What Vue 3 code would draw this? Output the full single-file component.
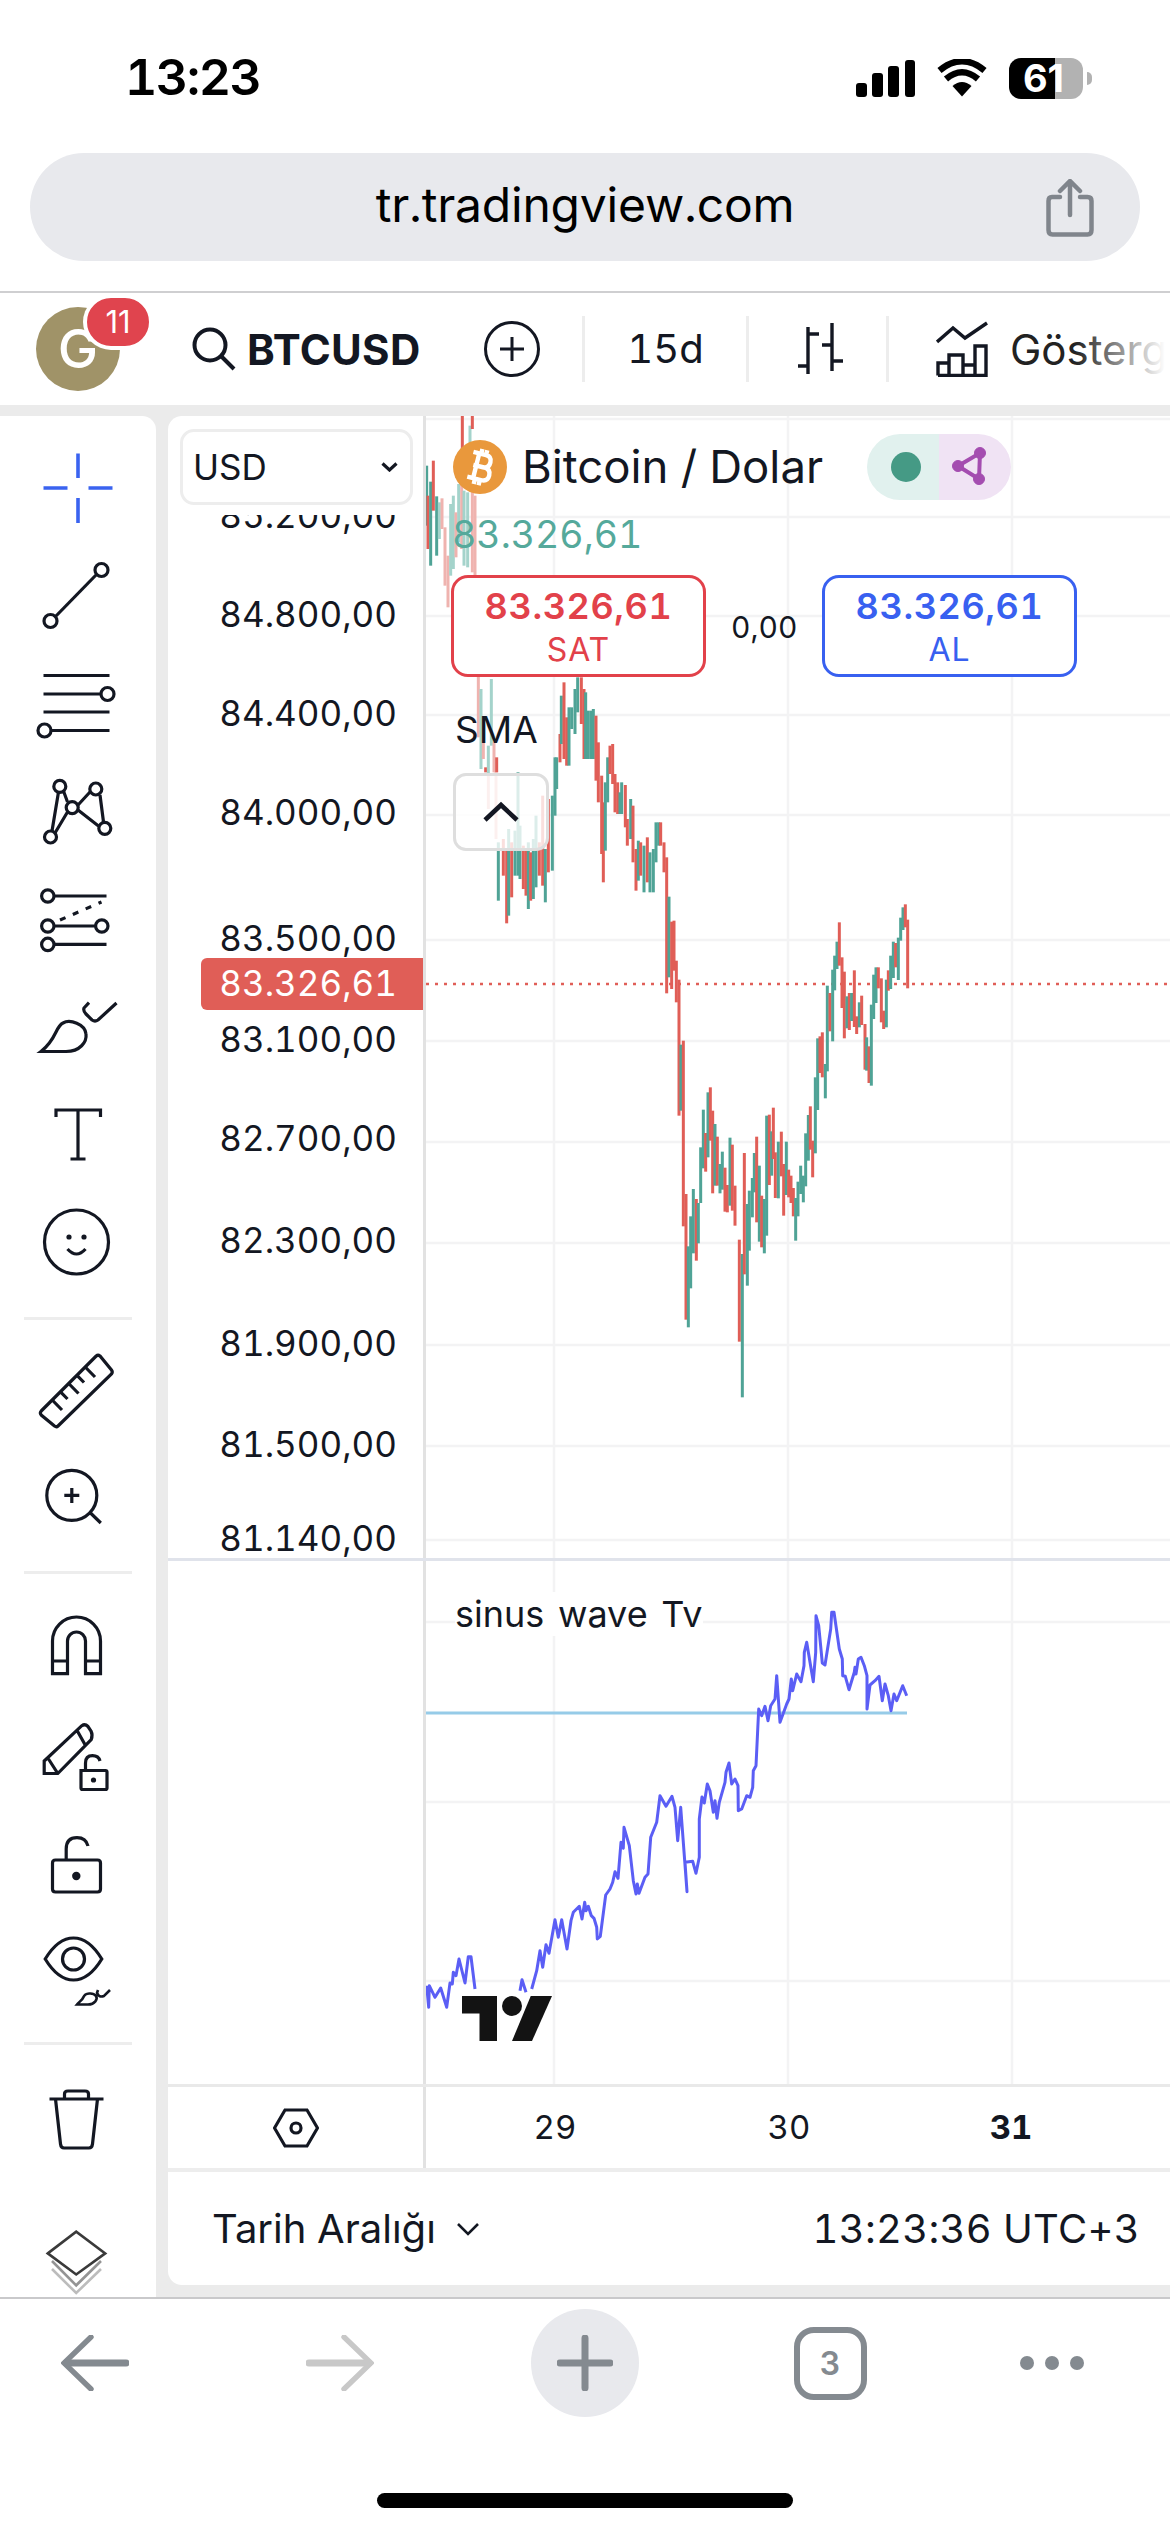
<script setup>
const R = '#e05e57', T = '#4fa396', P = '#efb3af', Q = '#a4d3cb'

// readings of the reference chart: [colour, x, top, bottom] in 3x crop units
const upper = [
  [T,20,170,350],[R,24,260,420],[T,32,218,470],[R,40,155,305],[T,50,262,440],[Q,58,280,390],[P,66,268,360],[P,75,355,530],[P,84,440,595],[Q,92,285,500],[Q,100,260,480],[P,108,310,445],[Q,116,225,400],[R,127,20,130],[P,125,130,420],[Q,132,245,470],[Q,143,250,475],[Q,150,50,230],[R,157,20,60],[P,157,230,490],[P,165,260,500],
  [P,175,800,985],[Q,183,840,1080],[P,190,985,1050],[R,197,1075,1090],[Q,214,810,1010],[Q,205,1010,1095],[P,222,1000,1090],[R,230,1045,1090],
  [P,205,1100,1200],[T,235,1300,1475],[P,228,1090,1290],[R,250,1290,1400],[R,260,1320,1543],[T,266,1260,1520],[R,275,1300,1465],[T,285,1265,1400],[T,294,1090,1400],[T,300,1250,1410],[R,310,1310,1440],[R,318,1320,1460],[T,325,1300,1500],[R,332,1330,1475],[T,340,1290,1470],[T,348,1220,1435],[R,358,1300,1400],[R,368,1160,1430],[T,376,1320,1480],[R,385,1170,1390],[T,397,1160,1385],[T,405,1045,1220],[T,410,1045,1140],[R,420,975,1060],[T,424,860,1005],[R,432,820,1050],[R,440,925,1070],[T,447,895,1070],[T,455,895,960],[T,465,840,975],[T,473,805,910],[R,484,805,945],[R,492,840,1050],[T,497,850,1050],[T,505,905,1050],[T,514,905,1050],[T,520,900,1050],[R,528,920,1115],[R,535,1000,1180],[R,545,1100,1335],[R,550,1180,1420],[T,556,1120,1325],[T,563,1045,1180],[R,570,1010,1095],[R,578,1005,1125],[R,585,1095,1210],[R,593,1120,1215],[T,600,1150,1215],[T,605,1120,1215],[R,616,1128,1255],[R,622,1230,1310],[T,632,1170,1290],[R,639,1190,1360],[R,648,1320,1445],[T,655,1295,1415],[R,662,1300,1400],[T,672,1310,1450],[R,682,1285,1420],[T,690,1330,1450],[T,700,1320,1450],[T,708,1240,1360],[T,716,1240,1310],[R,722,1240,1310],[R,732,1300,1390],[R,740,1345,1753],[T,747,1463,1705],[R,755,1538,1740],[R,762,1535,1685],
].map(([color, x, a, b]) => ({ color, x: 420 + x / 3, y: 410 + a / 3, h: (b - a) / 3 }))

const lower = [
  [R,769,185,310],[R,777,242,650],[T,783,437,635],[R,790,425,982],[R,798,885,1262],[T,805,1042,1285],[T,812,952,1168],[T,820,870,1063],[R,829,900,1085],[T,835,912,1033],[T,842,745,912],[T,850,632,808],[R,857,702,818],[T,864,580,775],[R,871,565,725],[R,878,635,883],[T,885,675,860],[R,892,713,860],[T,900,795,883],[T,907,758,872],[R,915,806,938],[R,922,858,940],[T,930,716,920],[R,937,737,935],[R,945,860,980],[R,958,1022,1328],[T,967,1065,1495],[R,973,762,1126],[T,982,915,1160],[T,988,875,1055],[T,997,837,955],[T,1003,762,880],[R,1010,713,970],[T,1018,800,1028],[R,1025,890,1045],[T,1033,900,1063],[T,1040,650,1010],[R,1048,647,858],[T,1055,697,830],[R,1060,626,780],[R,1066,760,897],[T,1075,728,898],[R,1084,698,832],[R,1091,795,950],[T,1099,728,888],[R,1106,812,895],[R,1113,830,912],[R,1120,867,952],[T,1127,897,1025],[T,1134,848,952],[T,1142,800,885],[T,1150,830,910],[T,1157,703,862],[T,1165,648,785],[R,1171,622,752],[R,1178,725,835],[T,1186,535,763],[T,1193,418,633],[R,1200,412,522],[R,1207,400,535],[T,1216,495,598],[T,1222,260,517],[R,1230,282,397],[T,1238,212,427],[T,1244,170,274],[T,1251,128,210],[R,1258,70,200],[R,1266,175,327],[R,1273,218,418],[T,1281,292,388],[R,1288,282,393],[T,1295,282,366],[R,1303,214,384],[R,1310,352,405],[T,1318,310,385],[R,1325,290,378],[R,1335,375,512],[T,1340,415,515],[R,1347,442,552],[T,1354,317,560],[T,1361,227,360],[T,1368,205,312],[R,1375,205,268],[R,1384,238,370],[R,1391,335,390],[T,1399,242,385],[R,1405,214,275],[T,1412,170,270],[T,1420,128,237],[R,1427,132,205],[T,1435,116,243],[T,1442,56,125],[T,1449,25,93],[R,1456,16,85],[R,1463,62,268],
].map(([color, x, a, b]) => ({ color, x: 420 + x / 3, y: 900 + a / 3, h: (b - a) / 3 }))

const candles = [...upper, ...lower]

const toPoints = (str) => str.trim().split(/\s+/).map((p) => {
  const [x, y] = p.split(',').map(Number)
  return `${(420 + x / 3).toFixed(1)},${(1560 + y / 3).toFixed(1)}`
}).join(' ')

const waveParts = [
  '20,1280 26,1345 28,1280 45,1315 62,1287 80,1345 90,1272 97,1275 100,1240 108,1250 117,1200 135,1272 145,1193 153,1193 165,1290',
  '300,1295 306,1262 318,1300',
  '335,1290 350,1235 360,1175 368,1225 378,1157 387,1183 405,1082 415,1135 425,1082 441,1170 453,1085 460,1060 478,1042 486,1080 494,1030 498,1055 505,1042 514,1070 522,1078 530,1105 532,1140 541,1132 557,1008 570,990 578,970 585,938 594,958 603,850 610,868 612,805 628,860 640,965 648,1005 652,975 657,1003 675,955 684,945 692,835 710,790 720,710 738,742 756,712 765,745 773,845 782,745 801,998 795,910 818,907 828,943 838,895 838,780 846,714 853,732 862,675 870,695 880,760 885,725 891,778 898,730 915,670 918,640 927,612 935,675 945,660 954,680 955,755 965,750 980,710 990,715 998,685 1000,635 1008,620 1016,450 1025,470 1035,442 1044,485 1052,440 1065,420 1070,350 1080,490 1100,435 1107,420 1114,360 1118,395 1130,345 1143,368 1152,320 1153,280 1160,250 1170,310 1180,368 1187,280 1188,170 1196,200 1207,312 1215,318 1232,210 1235,160 1242,160 1258,270 1267,300 1268,350 1276,352 1287,392 1303,340 1305,325 1308,345 1315,300 1323,295 1333,320 1341,350 1341,450 1350,378 1365,365 1377,352 1387,425 1395,375 1405,410 1413,455 1422,405 1430,425 1448,380 1460,410',
].map(toPoints)

const vGrid = [554, 788, 1012]
const hGridMain = [420, 518, 617, 716, 816, 941, 1042, 1143, 1244, 1346, 1447, 1541]
const hGridSub = [1623, 1803, 1982]

const prices = [
  ['85.200,00', 515], ['84.800,00', 614], ['84.400,00', 713], ['84.000,00', 812], ['83.500,00', 938],
  ['83.100,00', 1039], ['82.700,00', 1138], ['82.300,00', 1240], ['81.900,00', 1343], ['81.500,00', 1444], ['81.140,00', 1538],
].map(([label, y]) => ({ label, top: y - 417 - 21 }))

const days = [
  { label: '29', x: 129 }, { label: '30', x: 363 }, { label: '31', x: 585, bold: true },
]
</script>

<template>
  <div class="page">
    <header class="status">
      <span class="time">13:23</span>
      <div class="status-icons">
        <div class="signal"><i class="b1"></i><i class="b2"></i><i class="b3"></i><i class="b4"></i></div>
        <svg class="wifi" width="50" height="38" viewBox="0 0 50 38">
          <path d="M25 37.5 L15.5 27 Q25 19 34.5 27 Z" fill="#000" />
          <path d="M9 20 Q25 6.5 41 20" fill="none" stroke="#000" stroke-width="6.5" />
          <path d="M2.5 11.5 Q25 -7 47.5 11.5" fill="none" stroke="#000" stroke-width="6.5" />
        </svg>
        <div class="battery"><span class="batt-txt">61</span></div>
        <i class="nub"></i>
      </div>
    </header>

    <div class="url-wrap">
      <div class="url">
        <span class="url-text">tr.tradingview.com</span>
        <svg class="share" width="48" height="58" viewBox="0 0 48 58" fill="none" stroke="#80858c" stroke-width="4.5" stroke-linecap="round">
          <path d="M14 18 H6 Q2.5 18 2.5 22 V51 Q2.5 55.5 6.5 55.5 H41.5 Q45.5 55.5 45.5 51 V22 Q45.5 18 41.5 18 H34" />
          <path d="M24 36 V3 M14 12 L24 2 L34 12" />
        </svg>
      </div>
    </div>

    <div class="tv-head">
      <div class="cell-avatar">
        <div class="avatar">G<span class="badge">11</span></div>
      </div>
      <div class="cell-symbol">
        <svg width="44" height="44" viewBox="0 0 44 44" fill="none" stroke="#131722" stroke-width="4">
          <circle cx="18" cy="18" r="15.5" />
          <path d="M29 29 L42 42" />
        </svg>
        <span class="symbol">BTCUSD</span>
      </div>
      <div class="cell-plus">
        <svg width="56" height="56" viewBox="0 0 56 56" fill="none" stroke="#131722" stroke-width="3">
          <circle cx="28" cy="28" r="26.5" /><path d="M28 16 V40 M16 28 H40" />
        </svg>
      </div>
      <div class="cell-interval">15d</div>
      <div class="cell-bars">
        <svg width="46" height="52" viewBox="0 0 46 52" fill="none" stroke="#131722" stroke-width="3.4">
          <path d="M10 4 V51 M10 11 H21 M10 43 H0 M34 0 V48 M34 22 H24 M34 38 H45" />
        </svg>
      </div>
      <div class="cell-ind">
        <svg width="52" height="56" viewBox="0 0 52 56" fill="none" stroke="#131722" stroke-width="3.4">
          <path d="M1 21 L17 7 L29 17 L51 2" />
          <path d="M2 54.5 V42 H13 V54.5 M13 54.5 V34 H27 V54.5 M27 54.5 V44 H39 V54.5 M39 54.5 V25 H50 V54.5 H2 Z" />
        </svg>
        <span class="ind-text">Göstergeler</span>
        <i class="ind-fade"></i>
      </div>
    </div>

    <div class="body">
      <aside class="tools">
        <div class="tool-group g1">
          <div class="tool"><svg width="80" height="80" viewBox="0 0 80 80" fill="none" stroke="#3a63f0" stroke-width="3.6"><path d="M5.5 40 H29.5 M50.5 40 H74.5 M40 5.5 V30 M40 50 V75" /></svg></div>
          <div class="tool"><svg class="ico" width="80" height="80" viewBox="0 0 80 80"><path d="M18 61 L58 20" /><circle cx="12.5" cy="66" r="6.5" /><circle cx="63.5" cy="15" r="6.5" /></svg></div>
          <div class="tool"><svg class="ico" width="80" height="80" viewBox="0 0 80 80"><path d="M5.5 12.5 H71.5 M5.5 31 H63 M5.5 49 H71.5 M13 67.5 H71.5" /><circle cx="69.5" cy="31" r="6.5" /><circle cx="6.5" cy="67.5" r="6.5" /></svg></div>
          <div class="tool"><svg class="ico" width="80" height="80" viewBox="0 0 80 80"><path d="M14 60 L20.5 21 M25.5 20 L29.5 31 M17 62 L29.5 41 M40 34 L52 21 M62 24 L65.5 51 M60.5 55 L40 39" /><circle cx="12.5" cy="66" r="6" /><circle cx="21.8" cy="15.4" r="6" /><circle cx="34.2" cy="36.6" r="6" /><circle cx="57.8" cy="18" r="6" /><circle cx="66.8" cy="57.3" r="6" /></svg></div>
          <div class="tool"><svg class="ico" width="80" height="80" viewBox="0 0 80 80"><path d="M16 18 H68.5 M16 48 H57.5 M16 66.4 H68.5" /><path d="M22 42 L63.5 24" stroke-dasharray="6 8" /><circle cx="9.8" cy="18" r="6.2" /><circle cx="9.8" cy="48" r="6.2" /><circle cx="63.8" cy="48" r="6.2" /><circle cx="9.8" cy="66.4" r="6.2" /></svg></div>
          <div class="tool"><svg class="ico" width="80" height="80" viewBox="0 0 80 80"><path d="M3 65.5 H28 C42 65.5 49 56 48 48 C47 38 32 33 25 37 C17 41 19 53 3 65.5 Z" /><path d="M51 16.7 L46 22 Q45 25 48 28 L54 34 Q57 36 60 34 L78.5 17" /></svg></div>
          <div class="tool"><svg class="ico" width="80" height="80" viewBox="0 0 80 80"><path d="M18 24 V17 H62.5 V24 M40 17 V66 M32.5 66 H47.5" /></svg></div>
          <div class="tool"><svg class="ico" width="80" height="80" viewBox="0 0 80 80"><circle cx="38.5" cy="41" r="32" /><path d="M29.5 48 Q38.5 58 47.5 48" /><circle cx="31" cy="36" r="2.6" class="dot" /><circle cx="46" cy="36" r="2.6" class="dot" /></svg></div>
        </div>
        <hr class="tool-div d1" />
        <div class="tool-group g2">
          <div class="tool"><svg class="ico" width="80" height="80" viewBox="0 0 80 80"><path d="M3.2 60 L58.2 5 Q60 3.5 62 5 L73.5 19 Q75 21 73.5 23 L20 75 Q18.5 76.5 16.5 75 L3.2 64 Q1.5 62 3.2 60 Z" /><path d="M14.2 49 L24 59 M22.5 40.8 L29.5 48 M30.7 32.5 L40.5 42.5 M39 24.3 L46 31.5 M47.2 16 L57 26" /></svg></div>
          <div class="tool"><svg class="ico" width="80" height="80" viewBox="0 0 80 80"><circle cx="33.8" cy="41.4" r="25" /><path d="M26.3 41.4 H41.3 M33.8 33.9 V48.9 M52 58.5 L62.8 69" /></svg></div>
        </div>
        <hr class="tool-div d2" />
        <div class="tool-group g3">
          <div class="tool"><svg class="ico" width="80" height="80" viewBox="0 0 80 80"><path d="M14.5 66.7 V34 A24 24 0 0 1 62.5 34 V66.7 H47.5 V34 A9 9 0 0 0 29.5 34 V66.7 Z M14.5 54 H29.5 M47.5 54 H62.5" /></svg></div>
          <div class="tool"><svg class="ico" width="80" height="80" viewBox="0 0 80 80"><path d="M6.2 47 L43.8 11.7 Q47 9.5 50 12.5 L53 17 Q55 21 53.2 25.7 L19.8 59.5 H6.2 Z M10.5 45 L19.8 59.5 M38.8 16 L47.8 32" /><path d="M43 56.5 H67.5 Q69 56.5 69 58 V74 Q69 75.5 67.5 75.5 H44.5 Q43 75.5 43 74 Z M47.5 56.5 V49 Q47.5 41.7 54.5 41.7 Q60.5 41.7 62 47" /><circle cx="55.5" cy="66" r="2.6" class="dot" /></svg></div>
          <div class="tool"><svg class="ico" width="80" height="80" viewBox="0 0 80 80"><path d="M17.5 40 H59.5 Q62.5 40 62.5 43 V69 Q62.5 72 59.5 72 H17.5 Q14.5 72 14.5 69 V43 Q14.5 40 17.5 40 Z M28.2 40 V29 Q28.2 17.6 39 17.6 Q48 17.6 50 26" /><circle cx="38.3" cy="56" r="4.2" class="dot" /></svg></div>
          <div class="tool"><svg class="ico" width="80" height="80" viewBox="0 0 80 80"><path d="M7.2 32 Q20 11 35.5 11 Q51 11 63.8 32 Q51 53 35.5 53 Q20 53 7.2 32 Z" /><circle cx="35.5" cy="32" r="11" /><path d="M39 77.5 H50 C57 77.5 60 72 58 69 C55 65 47 66 45.5 70 C44.5 73 41 75 39 77.5 Z M60 63 L59 66 Q61 71 66 69 L72 63" stroke-width="2.6" /></svg></div>
        </div>
        <hr class="tool-div d3" />
        <div class="tool-group g4">
          <div class="tool"><svg class="ico" width="80" height="80" viewBox="0 0 80 80"><path d="M11.5 24 H65.5 M26.5 24 V19 Q26.5 16 30 16 H47 Q50.5 16 50.5 19 V24 M17.5 24 L22.5 69 Q23 73 26 73 H51 Q54 73 54.5 69 L59.5 24" /></svg></div>
        </div>
        <div class="layers">
          <svg width="80" height="80" viewBox="0 0 80 80" fill="none" stroke-width="2.6">
            <path d="M14 48 L38.2 72 L63 48" stroke="#bcbcbc" />
            <path d="M14 40 L38.2 64.3 L63 40" stroke="#949494" />
            <path d="M9.8 32.4 L38.2 10.7 L67.2 32.4 L38.2 53.5 Z" stroke="#3a3a3a" fill="#fff" />
          </svg>
        </div>
      </aside>

      <main class="card">
        <section class="pane pane-main">
          <div class="scale">
            <span v-for="p in prices" :key="p.label" class="price" :style="{ top: p.top + 'px' }">{{ p.label }}</span>
            <div class="select"><span>USD</span>
              <svg width="17" height="10" viewBox="0 0 17 10" fill="none" stroke="#131722" stroke-width="3.2"><path d="M1.5 1.5 L8.5 8 L15.5 1.5" /></svg>
            </div>
            <span class="tag">83.326,61</span>
          </div>
          <div class="plot">
            <svg class="canvas" width="744" height="1142" viewBox="426 417 744 1142">
              <line v-for="y in hGridMain" :key="y" x1="426" x2="1170" :y1="y" :y2="y" class="grid" />
              <line v-for="x in vGrid" :key="x" :x1="x" :x2="x" y1="417" y2="1559" class="grid" />
              <line x1="426" x2="1170" y1="985" y2="985" stroke="#e05e57" stroke-width="2.6" stroke-dasharray="3 6" />
              <rect v-for="(c, i) in candles" :key="i" :x="c.x - 1.5" :y="c.y" width="3" :height="c.h" :fill="c.color" />
            </svg>
            <div class="legend-title">
              <svg width="54" height="54" viewBox="0 0 54 54">
                <circle cx="27" cy="27" r="27" fill="#e9983c" />
                <g transform="rotate(14 27 27)" fill="none" stroke="#fff" stroke-width="4.4">
                  <path d="M20 14 H30 Q36 14 36 20 Q36 26.5 30 26.5 H20 M20 26.5 H31 Q38 26.5 38 33 Q38 39.5 31 39.5 H20 M23 13 V41 M17 14 H23 M17 39.5 H23 M25 9 V13 M30 9 V13 M25 40 V45 M30 40 V45" />
                </g>
              </svg>
              <span class="pair">Bitcoin / Dolar</span>
            </div>
            <div class="pill">
              <div class="pill-l"><i class="pill-dot"></i></div>
              <div class="pill-r">
                <svg width="36" height="40" viewBox="0 0 36 40" fill="#a44db0" stroke="#a44db0">
                  <path d="M6 19 L28 6 L27 32 Z" fill="none" stroke-width="4" />
                  <circle cx="6" cy="19" r="5.5" /><circle cx="28" cy="6" r="5.5" /><circle cx="27" cy="32" r="5.5" />
                </svg>
              </div>
            </div>
            <span class="last">83.326,61</span>
            <div class="trade sell"><b>83.326,61</b><span>SAT</span></div>
            <span class="spread">0,00</span>
            <div class="trade buy"><b>83.326,61</b><span>AL</span></div>
            <span class="sma">SMA</span>
            <div class="collapse">
              <svg width="36" height="22" viewBox="0 0 36 22" fill="none" stroke="#131722" stroke-width="4.6"><path d="M2 19 L18 4 L34 19" /></svg>
            </div>
          </div>
        </section>
        <div class="pane-sep"></div>
        <section class="pane pane-sub">
          <div class="scale"></div>
          <div class="plot">
            <svg class="canvas" width="744" height="523" viewBox="426 1562 744 523">
              <line v-for="y in hGridSub" :key="y" x1="426" x2="1170" :y1="y" :y2="y" class="grid" />
              <line v-for="x in vGrid" :key="x" :x1="x" :x2="x" y1="1562" y2="2085" class="grid" />
              <line x1="426" x2="907" y1="1714" y2="1714" stroke="#96cbe8" stroke-width="3" />
              <polyline v-for="(pts, i) in waveParts" :key="i" :points="pts" fill="none" stroke="#5b5ef5" stroke-width="3" stroke-linejoin="round" />
              <g transform="translate(462 1997) scale(2.5)" fill="#131313">
                <path d="M14 18 H7 V7 H0 V0 H14 Z" />
                <path d="M28 18 H20 L27.5 0 H36 Z" />
                <circle cx="20" cy="4" r="4" />
              </g>
            </svg>
            <span class="wave-title">sinus wave Tv</span>
          </div>
        </section>
        <div class="axis">
          <div class="axis-corner">
            <svg width="46" height="40" viewBox="0 0 46 40" fill="none" stroke="#131722" stroke-width="3.2"><path d="M12 2 H34 L44.5 20 L34 38 H12 L1.5 20 Z" /><circle cx="23" cy="20" r="5" /></svg>
          </div>
          <div class="axis-times">
            <span v-for="d in days" :key="d.label" class="day" :class="{ bold: d.bold }" :style="{ left: d.x + 'px' }">{{ d.label }}</span>
          </div>
        </div>
        <footer class="foot">
          <div class="range"><span>Tarih Aralığı</span>
            <svg width="24" height="14" viewBox="0 0 24 14" fill="none" stroke="#131722" stroke-width="2.6"><path d="M2 2 L12 12 L22 2" /></svg>
          </div>
          <span class="clock">13:23:36 UTC+3</span>
        </footer>
      </main>
    </div>

    <nav class="browser">
      <div class="nav-row">
        <div class="nav-cell">
          <svg width="68" height="56" viewBox="0 0 68 56" fill="none" stroke="#848a90" stroke-linecap="round"><path d="M30 2 L3 28 L30 54" stroke-width="5.4" /><path d="M5 28 H65" stroke-width="7" /></svg>
        </div>
        <div class="nav-cell">
          <svg width="68" height="56" viewBox="0 0 68 56" fill="none" stroke="#c8c8c8" stroke-linecap="round"><path d="M38 2 L65 28 L38 54" stroke-width="5.4" /><path d="M3 28 H63" stroke-width="7" /></svg>
        </div>
        <div class="nav-cell">
          <div class="plus-btn">
            <svg width="56" height="56" viewBox="0 0 56 56" stroke="#848a90" stroke-linecap="round" stroke-width="7"><path d="M28 3 V53 M3 28 H53" /></svg>
          </div>
        </div>
        <div class="nav-cell"><div class="tabs">3</div></div>
        <div class="nav-cell dots"><i></i><i></i><i></i></div>
      </div>
      <div class="home"></div>
    </nav>
  </div>
</template>

<style>
html, body { margin: 0; background: #fff; }
</style>

<style scoped>
.page { width: 1170px; height: 2532px; overflow: hidden; display: flex; flex-direction: column; background: #fff; color: #131722; font-family: Inter, "Liberation Sans", sans-serif; font-variant-numeric: tabular-nums; }

/* status bar */
.status { height: 153px; box-sizing: border-box; padding: 58px 78px 0 125px; display: flex; justify-content: space-between; align-items: flex-start; }
.time { font-size: 50px; font-weight: 600; line-height: 38px; color: #000; letter-spacing: -1.5px; }
.status-icons { display: flex; align-items: center; height: 40px; position: relative; }
.signal { display: flex; align-items: flex-end; gap: 5.6px; height: 37px; margin-right: 22px; }
.signal i { display: block; width: 10.5px; background: #000; border-radius: 3px; }
.b1 { height: 14px; } .b2 { height: 24px; } .b3 { height: 31px; } .b4 { height: 37px; }
.wifi { margin-right: 22px; }
.battery { width: 74px; height: 41px; border-radius: 12px; background: linear-gradient(90deg, #000 0 46px, #b2b2b2 46px); display: flex; align-items: center; justify-content: flex-end; padding-right: 19px; box-sizing: border-box; }
.batt-txt { font-size: 38px; font-weight: 700; line-height: 41px; color: #fff; font-variant-numeric: proportional-nums; }
.nub { width: 5px; height: 13px; margin-left: 4px; background: #b2b2b2; border-radius: 0 6px 6px 0; }

/* url */
.url-wrap { height: 138px; padding: 0 30px; box-sizing: border-box; }
.url { position: relative; height: 108px; border-radius: 54px; background: #e8e9ed; display: flex; align-items: center; justify-content: center; }
.url-text { font-size: 48px; color: #000; margin-top: -5px; letter-spacing: -.2px; }
.share { position: absolute; right: 46px; top: 26px; }

/* trading header */
.tv-head { height: 114px; box-sizing: border-box; border-top: 2px solid #cfcfd1; display: flex; align-items: center; font-size: 40px; overflow: hidden; position: relative; }
.cell-avatar { flex: none; width: 192px; padding-left: 36px; box-sizing: border-box; }
.avatar { position: relative; width: 84px; height: 84px; border-radius: 50%; background: #a09368; color: #fff; font-size: 54px; line-height: 84px; text-align: center; font-weight: 500; }
.badge { position: absolute; left: 49px; top: -11px; width: 66px; height: 52px; box-sizing: border-box; border: 2px solid #fff; border-radius: 26px; background: #e0444e; color: #fff; font-size: 31px; line-height: 48px; font-weight: 400; box-shadow: 0 0 0 2px #fff; font-variant-numeric: proportional-nums; }
.cell-symbol { flex: none; width: 292px; box-sizing: border-box; display: flex; align-items: center; gap: 11px; }
.symbol { font-weight: 700; font-size: 42px; letter-spacing: .3px; }
.cell-plus { flex: none; width: 101px; box-sizing: border-box; border-right: 3px solid #ededed; height: 66px; display: flex; align-items: center; }
.cell-interval { flex: none; width: 164px; box-sizing: border-box; height: 66px; line-height: 66px; text-align: center; border-right: 3px solid #ededed; }
.cell-bars { flex: none; width: 140px; box-sizing: border-box; height: 66px; padding-left: 6px; display: flex; align-items: center; justify-content: center; border-right: 3px solid #ededed; }
.cell-ind { flex: none; display: flex; align-items: center; padding-left: 47px; gap: 22px; white-space: nowrap; }
.ind-text { color: #222; font-size: 42px; }
.ind-fade { position: absolute; right: 0; top: 0; bottom: 0; width: 95px; background: linear-gradient(90deg, rgba(255,255,255,0), #fff 95%); }

/* body */
.body { height: 1892px; box-sizing: border-box; padding-top: 11px; background: #ebebeb; display: flex; gap: 12px; }
.tools { width: 156px; background: #fff; border-top-right-radius: 14px; display: flex; flex-direction: column; padding-top: 18px; overflow: hidden; box-sizing: border-box; }
.tool-group { display: flex; flex-direction: column; }
.tool { display: flex; align-items: center; justify-content: center; }
.g1 .tool { height: 107.6px; }
.g2 .tool { height: 103px; }
.g3 .tool { height: 106.6px; }
.g4 .tool { height: 106px; }
.ico { fill: none; stroke: #131722; stroke-width: 3.2; overflow: visible; }
.ico .dot { fill: #131722; stroke: none; }
.tool-div { border: 0; height: 3px; background: #ededed; width: 108px; margin: 0 0 0 24px; flex: none; }
.d1 { margin-top: 22px; margin-bottom: 20px; }
.d2 { margin-top: 25px; margin-bottom: 20px; }
.d3 { margin-top: 22px; margin-bottom: 17px; }
.layers { margin-top: 53px; display: flex; justify-content: center; }

.card { flex: 1; min-width: 0; height: 1869px; background: #fff; border-top-left-radius: 14px; border-bottom-left-radius: 14px; display: flex; flex-direction: column; overflow: hidden; }
.pane { display: flex; position: relative; }
.pane-main { height: 1142px; }
.pane-sub { height: 523px; border-bottom: 3px solid #e9e9e9; }
.pane-sep { height: 3px; background: #e0e3eb; flex: none; }
.scale { width: 255px; position: relative; flex: none; }
.plot { flex: 1; position: relative; border-left: 3px solid #e2e2e2; overflow: hidden; }
.canvas { display: block; }
.grid { stroke: #f3f3f4; stroke-width: 2.6; }

.price { position: absolute; right: 26px; font-size: 35px; line-height: 44px; color: #131722; white-space: nowrap; }
.select { position: absolute; left: 12px; top: 13px; width: 233px; height: 76px; box-sizing: border-box; border: 3px solid #ededed; border-radius: 14px; background: #fff; box-shadow: 0 10px 0 #fff; display: flex; align-items: center; justify-content: space-between; padding: 0 12px 0 10px; font-size: 35px; }
.tag { position: absolute; right: 0; left: 33px; top: 542px; height: 52px; box-sizing: border-box; padding-right: 26px; background: #e05e57; border-radius: 6px 0 0 6px; color: #fff; font-size: 35px; line-height: 50px; text-align: right; }

.legend-title { position: absolute; left: 27px; top: 24px; display: flex; align-items: center; gap: 15px; }
.pair { font-size: 45.5px; line-height: 54px; color: #131722; white-space: nowrap; }
.pill { position: absolute; left: 441px; top: 18px; width: 144px; height: 66px; border-radius: 33px; overflow: hidden; display: flex; }
.pill-l { width: 72px; background: #e1f1ee; display: flex; align-items: center; padding-left: 24px; box-sizing: border-box; }
.pill-dot { width: 30px; height: 30px; border-radius: 50%; background: #459a85; }
.pill-r { flex: 1; background: #f0e3f4; display: flex; align-items: center; padding-left: 13px; }
.last { position: absolute; left: 26px; top: 97px; font-size: 37.5px; line-height: 44px; color: #55a99b; white-space: nowrap; }
.trade { position: absolute; top: 159px; width: 255px; height: 102px; box-sizing: border-box; background: #fff; border: 3.5px solid; border-radius: 17px; display: flex; flex-direction: column; align-items: center; }
.trade b { font-size: 36px; font-weight: 600; line-height: 44px; margin-top: 6px; letter-spacing: .6px; }
.trade span { font-size: 32px; line-height: 36px; margin-top: 4px; letter-spacing: 1px; }
.sell { left: 25px; color: #e2414a; border-color: #e2414a; }
.buy { left: 396px; color: #3860f0; border-color: #3860f0; }
.spread { position: absolute; left: 305px; top: 193px; font-size: 30px; line-height: 36px; color: #131722; }
.sma { position: absolute; left: 29px; top: 292px; font-size: 37px; line-height: 44px; color: #131722; }
.collapse { position: absolute; left: 27px; top: 357px; width: 96px; height: 78px; box-sizing: border-box; border: 3.5px solid #dedede; border-radius: 13px; background: rgba(255,255,255,.8); display: flex; align-items: center; justify-content: center; }
.wave-title { position: absolute; left: 29px; top: 31px; font-size: 36px; line-height: 44px; color: #131722; white-space: nowrap; background: #fff; word-spacing: 4px; }

.axis { height: 81px; display: flex; flex: none; }
.axis-corner { width: 255px; display: flex; align-items: center; justify-content: center; box-sizing: border-box; }
.axis-times { flex: 1; position: relative; border-left: 3px solid #e2e2e2; }
.day { position: absolute; top: 18px; font-size: 33px; line-height: 44px; transform: translateX(-50%); color: #131722; }
.day.bold { font-weight: 700; }
.foot { flex: 1; border-top: 4px solid #ededed; display: flex; align-items: center; justify-content: space-between; padding: 0 30px 0 44px; font-size: 40px; }
.range { display: flex; align-items: center; gap: 20px; }
.clock { white-space: nowrap; letter-spacing: .3px; }

/* browser chrome */
.browser { flex: 1; border-top: 2px solid #c9c9cb; display: flex; flex-direction: column; align-items: center; background: #fff; }
.nav-row { display: grid; grid-template-columns: 190px 300px 190px 300px 144px; width: 1170px; padding-top: 10px; height: 108px; }
.nav-cell { display: flex; align-items: center; justify-content: center; }
.plus-btn { width: 108px; height: 108px; border-radius: 50%; background: #e8e9ed; display: flex; align-items: center; justify-content: center; }
.tabs { width: 73px; height: 73px; box-sizing: border-box; border: 6.5px solid #848a90; border-radius: 20px; color: #848a90; font-size: 32px; font-weight: 600; display: flex; align-items: center; justify-content: center; }
.dots { gap: 11px; }
.dots i { display: block; width: 14px; height: 14px; border-radius: 50%; background: #848a90; }
.home { width: 416px; height: 15px; border-radius: 8px; background: #000; margin-top: 76px; }
</style>
